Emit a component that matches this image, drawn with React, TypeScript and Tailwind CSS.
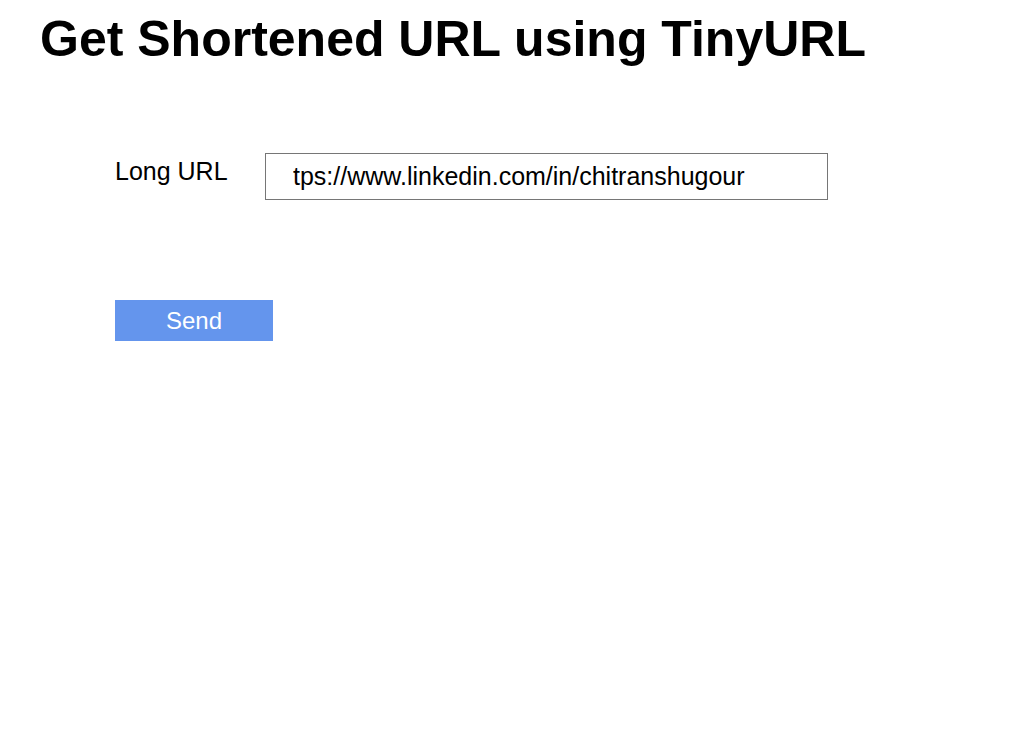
import { useState } from "react";

export default function App() {
  const [url, setUrl] = useState("tps://www.linkedin.com/in/chitranshugour");

  return (
    <div className="min-h-screen bg-white text-black font-['Liberation_Sans',Arial,sans-serif]">
      <h1 className="ml-[40px] pt-[11px] text-[50px] font-bold leading-[57px]">
        Get Shortened URL using TinyURL
      </h1>
      <form
        className="mt-[85px] pl-[115px]"
        onSubmit={(e) => e.preventDefault()}
      >
        <div className="flex items-start">
          <label htmlFor="long-url" className="mt-[4px] w-[150px] text-[25px] leading-[29px]">
            Long URL
          </label>
          <input
            id="long-url"
            type="text"
            value={url}
            onChange={(e) => setUrl(e.target.value)}
            className="h-[47px] w-[563px] border border-[#767676] pl-[27px] text-[25px] outline-none"
          />
        </div>
        <button
          type="submit"
          className="mt-[100px] h-[41px] w-[158px] bg-[#6495ed] text-[24px] leading-[41px] text-white"
        >
          Send
        </button>
      </form>
    </div>
  );
}
